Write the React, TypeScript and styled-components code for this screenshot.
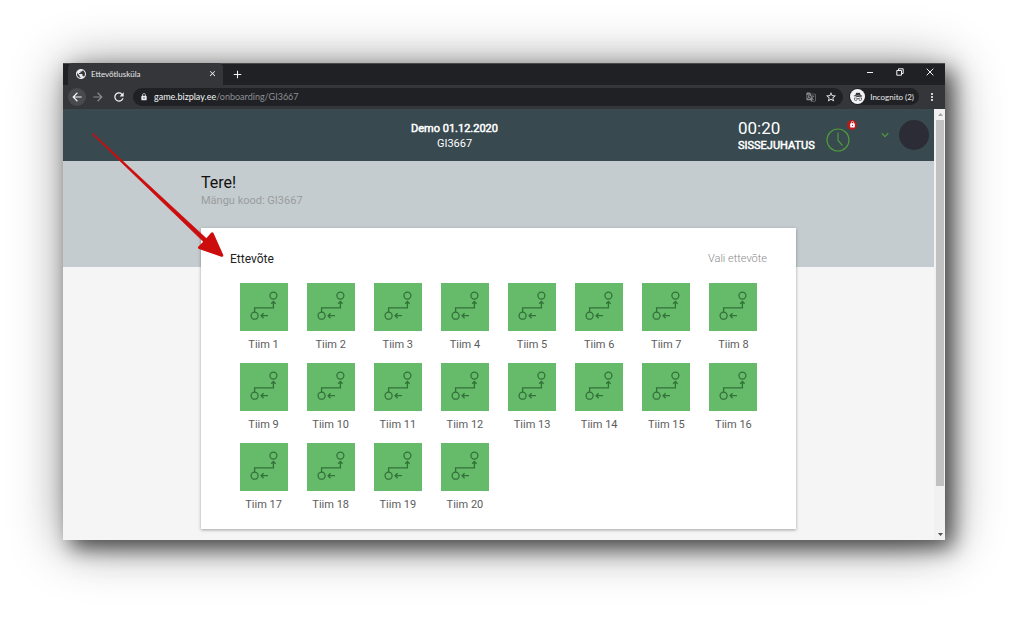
import React from 'react';
import styled, { createGlobalStyle } from 'styled-components';
import {
  MdAdd,
  MdArrowBack,
  MdArrowForward,
  MdClose,
  MdGTranslate,
  MdLock,
  MdMoreVert,
  MdPublic,
  MdRefresh,
  MdStarBorder,
} from 'react-icons/md';
import { BsIncognito } from 'react-icons/bs';

const GlobalStyle = createGlobalStyle`
  *, *::before, *::after { box-sizing: border-box; }
  body { margin: 0; background: #fff; font-family: Roboto, sans-serif; }
  h1, h2, p { margin: 0; font-weight: 400; }
  button { border: 0; padding: 0; background: none; font: inherit; color: inherit; cursor: pointer; }
  svg { display: block; }
`;

const Stage = styled.main`
  padding: 63px 79px 79px 63px;
`;

const BrowserWindow = styled.div`
  position: relative;
  box-shadow:
    8px 8px 20px rgba(0, 0, 0, 0.62),
    3px 4px 50px rgba(0, 0, 0, 0.45);
`;

const TabStrip = styled.div`
  display: flex;
  align-items: stretch;
  height: 22px;
  padding-left: 5px;
  background: #202124;
  color: #e8eaed;
  box-shadow: inset 0 1px #4a4b4e;
`;

const Tab = styled.div`
  display: flex;
  align-items: center;
  width: 155px;
  padding: 0 6px 1px 7px;
  gap: 4px;
  border-radius: 5px 5px 0 0;
  background: #35363a;
  font: 8px/12px Lato, sans-serif;
`;

const TabTitle = styled.span`
  flex: 1;
`;

const IconButton = styled.button<{ $size?: number; $filled?: boolean; $dim?: boolean }>`
  display: grid;
  place-items: center;
  flex: none;
  width: ${(p) => p.$size ?? 18}px;
  height: ${(p) => p.$size ?? 18}px;
  border-radius: 50%;
  background: ${(p) => (p.$filled ? '#494a4e' : 'transparent')};
  color: ${(p) => (p.$dim ? '#8b8c8f' : '#f1f3f4')};
`;

const NewTab = styled(IconButton)`
  align-self: center;
  margin-left: 5px;
`;

const WindowControls = styled.div`
  display: flex;
  align-items: center;
  gap: 12px;
  margin-left: auto;
  padding: 0 6px 4px 0;
`;

const Toolbar = styled.div`
  display: flex;
  align-items: center;
  height: 24px;
  padding: 0 4px 1px 5px;
  background: #35363a;
  color: #e8eaed;
  font: 9px/12px Lato, sans-serif;
`;

const NavButtons = styled.nav`
  display: flex;
  gap: 3px;
  margin-right: 5px;
`;

const AddressBar = styled.div`
  display: flex;
  flex: 1;
  align-items: center;
  height: 18px;
  padding: 0 3px 0 7px;
  border-radius: 9px;
  background: #202124;
`;

const Url = styled.span`
  flex: 1;
  margin-left: 6px;
  color: #8d9094;
`;

const Host = styled.span`
  color: #f1f3f4;
`;

const AddressActions = styled.div`
  display: flex;
  gap: 2px;
`;

const Incognito = styled.button`
  display: flex;
  align-items: center;
  gap: 5px;
  height: 17px;
  margin: 0 4px 0 6px;
  padding: 0 5px 0 1px;
  border-radius: 9px;
  background: #202124;
  font-size: 8px;
`;

const IncognitoMark = styled.span`
  display: grid;
  place-items: center;
  width: 15px;
  height: 15px;
  border-radius: 50%;
  background: #f1f3f4;
  color: #35363a;
`;

const Viewport = styled.div`
  display: flex;
`;

const Page = styled.div`
  flex: 1;
  min-width: 0;
  padding-bottom: 11px;
  background: #f5f5f5;
`;

const AppHeader = styled.header`
  display: grid;
  grid-template-columns: 108px 1fr auto;
  align-items: center;
  height: 52px;
  padding-right: 5px;
  background: #384a4f;
  color: #fff;
`;

const GameTitle = styled.div`
  grid-column: 2;
  padding-top: 1px;
  text-align: center;
  font-size: 11px;
  line-height: 15px;
`;

const GameName = styled.h1`
  font-size: 11px;
  line-height: 15px;
  -webkit-text-stroke: 0.5px currentColor;
`;

const HeaderTools = styled.div`
  display: flex;
  align-items: center;
`;

const Timer = styled.div`
  width: 88px;
  padding-top: 3px;
  line-height: 18px;
`;

const TimerValue = styled.p`
  font-size: 17px;
`;

const TimerStage = styled.p`
  font-size: 11px;
  -webkit-text-stroke: 0.5px currentColor;
`;

const ClockButton = styled.button`
  position: relative;
  width: 24px;
  height: 24px;
  margin-top: 9px;
  color: #4f9a3c;
`;

const LockBadge = styled.span`
  position: absolute;
  top: -8px;
  right: -7px;
  display: grid;
  place-items: center;
  width: 10px;
  height: 10px;
  border-radius: 50%;
  background: #b71c1c;
  color: #fff;
`;

const MenuButton = styled.button`
  display: flex;
  align-items: center;
  gap: 10px;
  margin-left: 31px;
  color: #4f9a3c;
`;

const Avatar = styled.span`
  width: 30px;
  height: 30px;
  border-radius: 50%;
  background: #2b2c35;
`;

const Hero = styled.section`
  height: 106px;
  padding-top: 12px;
  background: #c5ccd0;
`;

const Column = styled.div`
  max-width: 595px;
  margin: 0 auto;
`;

const Greeting = styled.h2`
  font-size: 16px;
  line-height: 20px;
  color: #111;
`;

const GameCode = styled.p`
  font-size: 11px;
  line-height: 16px;
  color: #9a9c9d;
`;

const Card = styled.section`
  position: relative;
  max-width: 595px;
  margin: -39px auto 0;
  padding: 21px 29px 14px;
  background: #fff;
  box-shadow: 0 1px 3px rgba(0, 0, 0, 0.35);
`;

const CardHeader = styled.header`
  display: flex;
  justify-content: space-between;
  align-items: center;
  margin-bottom: 14px;
  line-height: 20px;
`;

const CardTitle = styled.h2`
  font-size: 12px;
  color: #222;
`;

const CardHint = styled.span`
  font-size: 11px;
  font-weight: 300;
  color: #8a8a8a;
`;

const TeamGrid = styled.div`
  display: grid;
  grid-template-columns: repeat(8, 1fr);
  row-gap: 8px;
`;

const Team = styled.button`
  display: flex;
  flex-direction: column;
  align-items: center;
  gap: 4px;
  height: 72px;
  font-size: 11px;
  line-height: 20px;
  color: #5c5c5c;
`;

const TeamTile = styled.span`
  width: 48px;
  height: 48px;
  background: #66bb6a;
  color: #33713a;
`;

const ScrollTrack = styled.div`
  display: flex;
  flex-direction: column;
  width: 11px;
  padding: 0 1px 0 2px;
  background: #f1f1f1;
`;

const ScrollArrow = styled.span<{ $down?: boolean }>`
  display: grid;
  place-items: center;
  height: 11px;
  color: ${(p) => (p.$down ? '#505050' : '#a3a3a3')};
`;

const ScrollThumb = styled.span`
  flex: 0 0 85%;
  background: #c1c1c1;
`;

const ScrollRest = styled.span`
  flex: 1;
`;

const Pointer = styled.svg`
  position: absolute;
  top: 68px;
  left: 27px;
  pointer-events: none;
`;

const RouteIcon = () => (
  <svg width="48" height="48" viewBox="0 0 48 48" fill="none" stroke="currentColor" strokeWidth="1.3">
    <circle cx="33.4" cy="12.6" r="3.5" />
    <circle cx="14.6" cy="32.7" r="3.5" />
    <path d="M14.6 29.2V24.8H33.4V18.6M31.2 20.7L33.4 18.5L35.6 20.7" />
    <path d="M28 32.7H21.2M23.6 30.2L21.1 32.7L23.6 35.2" />
  </svg>
);

const teams = Array.from({ length: 20 }, (_, i) => `Tiim ${i + 1}`);

export default function App() {
  return (
    <Stage>
      <GlobalStyle />
      <BrowserWindow>
        <TabStrip>
          <Tab>
            <MdPublic size={12} />
            <TabTitle>Ettevõtlusküla</TabTitle>
            <IconButton $size={10} aria-label="Close tab">
              <MdClose size={9} />
            </IconButton>
          </Tab>
          <NewTab aria-label="New tab">
            <MdAdd size={13} />
          </NewTab>
          <WindowControls>
            <IconButton aria-label="Minimize">
              <svg width="8" height="8" viewBox="0 0 8 8" stroke="currentColor">
                <path d="M1 4.5H7" />
              </svg>
            </IconButton>
            <IconButton aria-label="Restore">
              <svg width="8" height="8" viewBox="0 0 8 8" fill="none" stroke="currentColor">
                <path d="M.8 2.5H5.5V7.2H.8ZM2.5 2.5V.8H7.2V5.5H5.5" />
              </svg>
            </IconButton>
            <IconButton aria-label="Close">
              <svg width="8" height="8" viewBox="0 0 8 8" stroke="currentColor">
                <path d="M.7 .7L7.3 7.3M7.3 .7L.7 7.3" />
              </svg>
            </IconButton>
          </WindowControls>
        </TabStrip>
        <Toolbar>
          <NavButtons>
            <IconButton $filled aria-label="Back">
              <MdArrowBack size={14} />
            </IconButton>
            <IconButton $dim aria-label="Forward">
              <MdArrowForward size={14} />
            </IconButton>
            <IconButton aria-label="Reload">
              <MdRefresh size={14} />
            </IconButton>
          </NavButtons>
          <AddressBar>
            <MdLock size={8} />
            <Url>
              <Host>game.bizplay.ee</Host>/onboarding/GI3667
            </Url>
            <AddressActions>
              <IconButton $dim aria-label="Translate">
                <MdGTranslate size={10} />
              </IconButton>
              <IconButton aria-label="Bookmark">
                <MdStarBorder size={12} />
              </IconButton>
            </AddressActions>
          </AddressBar>
          <Incognito>
            <IncognitoMark>
              <BsIncognito size={10} />
            </IncognitoMark>
            Incognito (2)
          </Incognito>
          <IconButton aria-label="Menu">
            <MdMoreVert size={12} />
          </IconButton>
        </Toolbar>
        <Viewport>
          <Page>
            <AppHeader>
              <GameTitle>
                <GameName>Demo 01.12.2020</GameName>
                <p>GI3667</p>
              </GameTitle>
              <HeaderTools>
                <Timer>
                  <TimerValue>00:20</TimerValue>
                  <TimerStage>SISSEJUHATUS</TimerStage>
                </Timer>
                <ClockButton aria-label="Timer">
                  <svg width="24" height="24" viewBox="0 0 24 24" fill="none" stroke="currentColor" strokeWidth="1.2">
                    <circle cx="12" cy="12" r="11" />
                    <path d="M12 4.5V12.5L16.5 17.5" />
                  </svg>
                  <LockBadge>
                    <MdLock size={7} />
                  </LockBadge>
                </ClockButton>
                <MenuButton aria-label="Account">
                  <svg width="8" height="6" viewBox="0 0 8 6" fill="none" stroke="currentColor" strokeWidth="1.2">
                    <path d="M.8 1.2L4 4.6L7.2 1.2" />
                  </svg>
                  <Avatar />
                </MenuButton>
              </HeaderTools>
            </AppHeader>
            <Hero>
              <Column>
                <Greeting>Tere!</Greeting>
                <GameCode>Mängu kood: GI3667</GameCode>
              </Column>
            </Hero>
            <Card>
              <CardHeader>
                <CardTitle>Ettevõte</CardTitle>
                <CardHint>Vali ettevõte</CardHint>
              </CardHeader>
              <TeamGrid>
                {teams.map((name) => (
                  <Team key={name}>
                    <TeamTile>
                      <RouteIcon />
                    </TeamTile>
                    {name}
                  </Team>
                ))}
              </TeamGrid>
            </Card>
          </Page>
          <ScrollTrack>
            <ScrollArrow>
              <svg width="5" height="3" viewBox="0 0 5 3" fill="currentColor">
                <path d="M0 3L2.5 0L5 3Z" />
              </svg>
            </ScrollArrow>
            <ScrollThumb />
            <ScrollRest />
            <ScrollArrow $down>
              <svg width="5" height="3" viewBox="0 0 5 3" fill="currentColor">
                <path d="M0 0L2.5 3L5 0Z" />
              </svg>
            </ScrollArrow>
          </ScrollTrack>
        </Viewport>
        <Pointer width="136" height="130" viewBox="0 0 136 130" fill="#cc0d0d" stroke="#cc0d0d" strokeLinejoin="round">
          <path d="M2.3 3.2L3 2.6L118 109L115 112.2Z" strokeWidth=".6" />
          <path d="M122.2 102.8L131.8 124.3L109.5 116.5L115.5 110.5Z" strokeWidth="3" />
        </Pointer>
      </BrowserWindow>
    </Stage>
  );
}
